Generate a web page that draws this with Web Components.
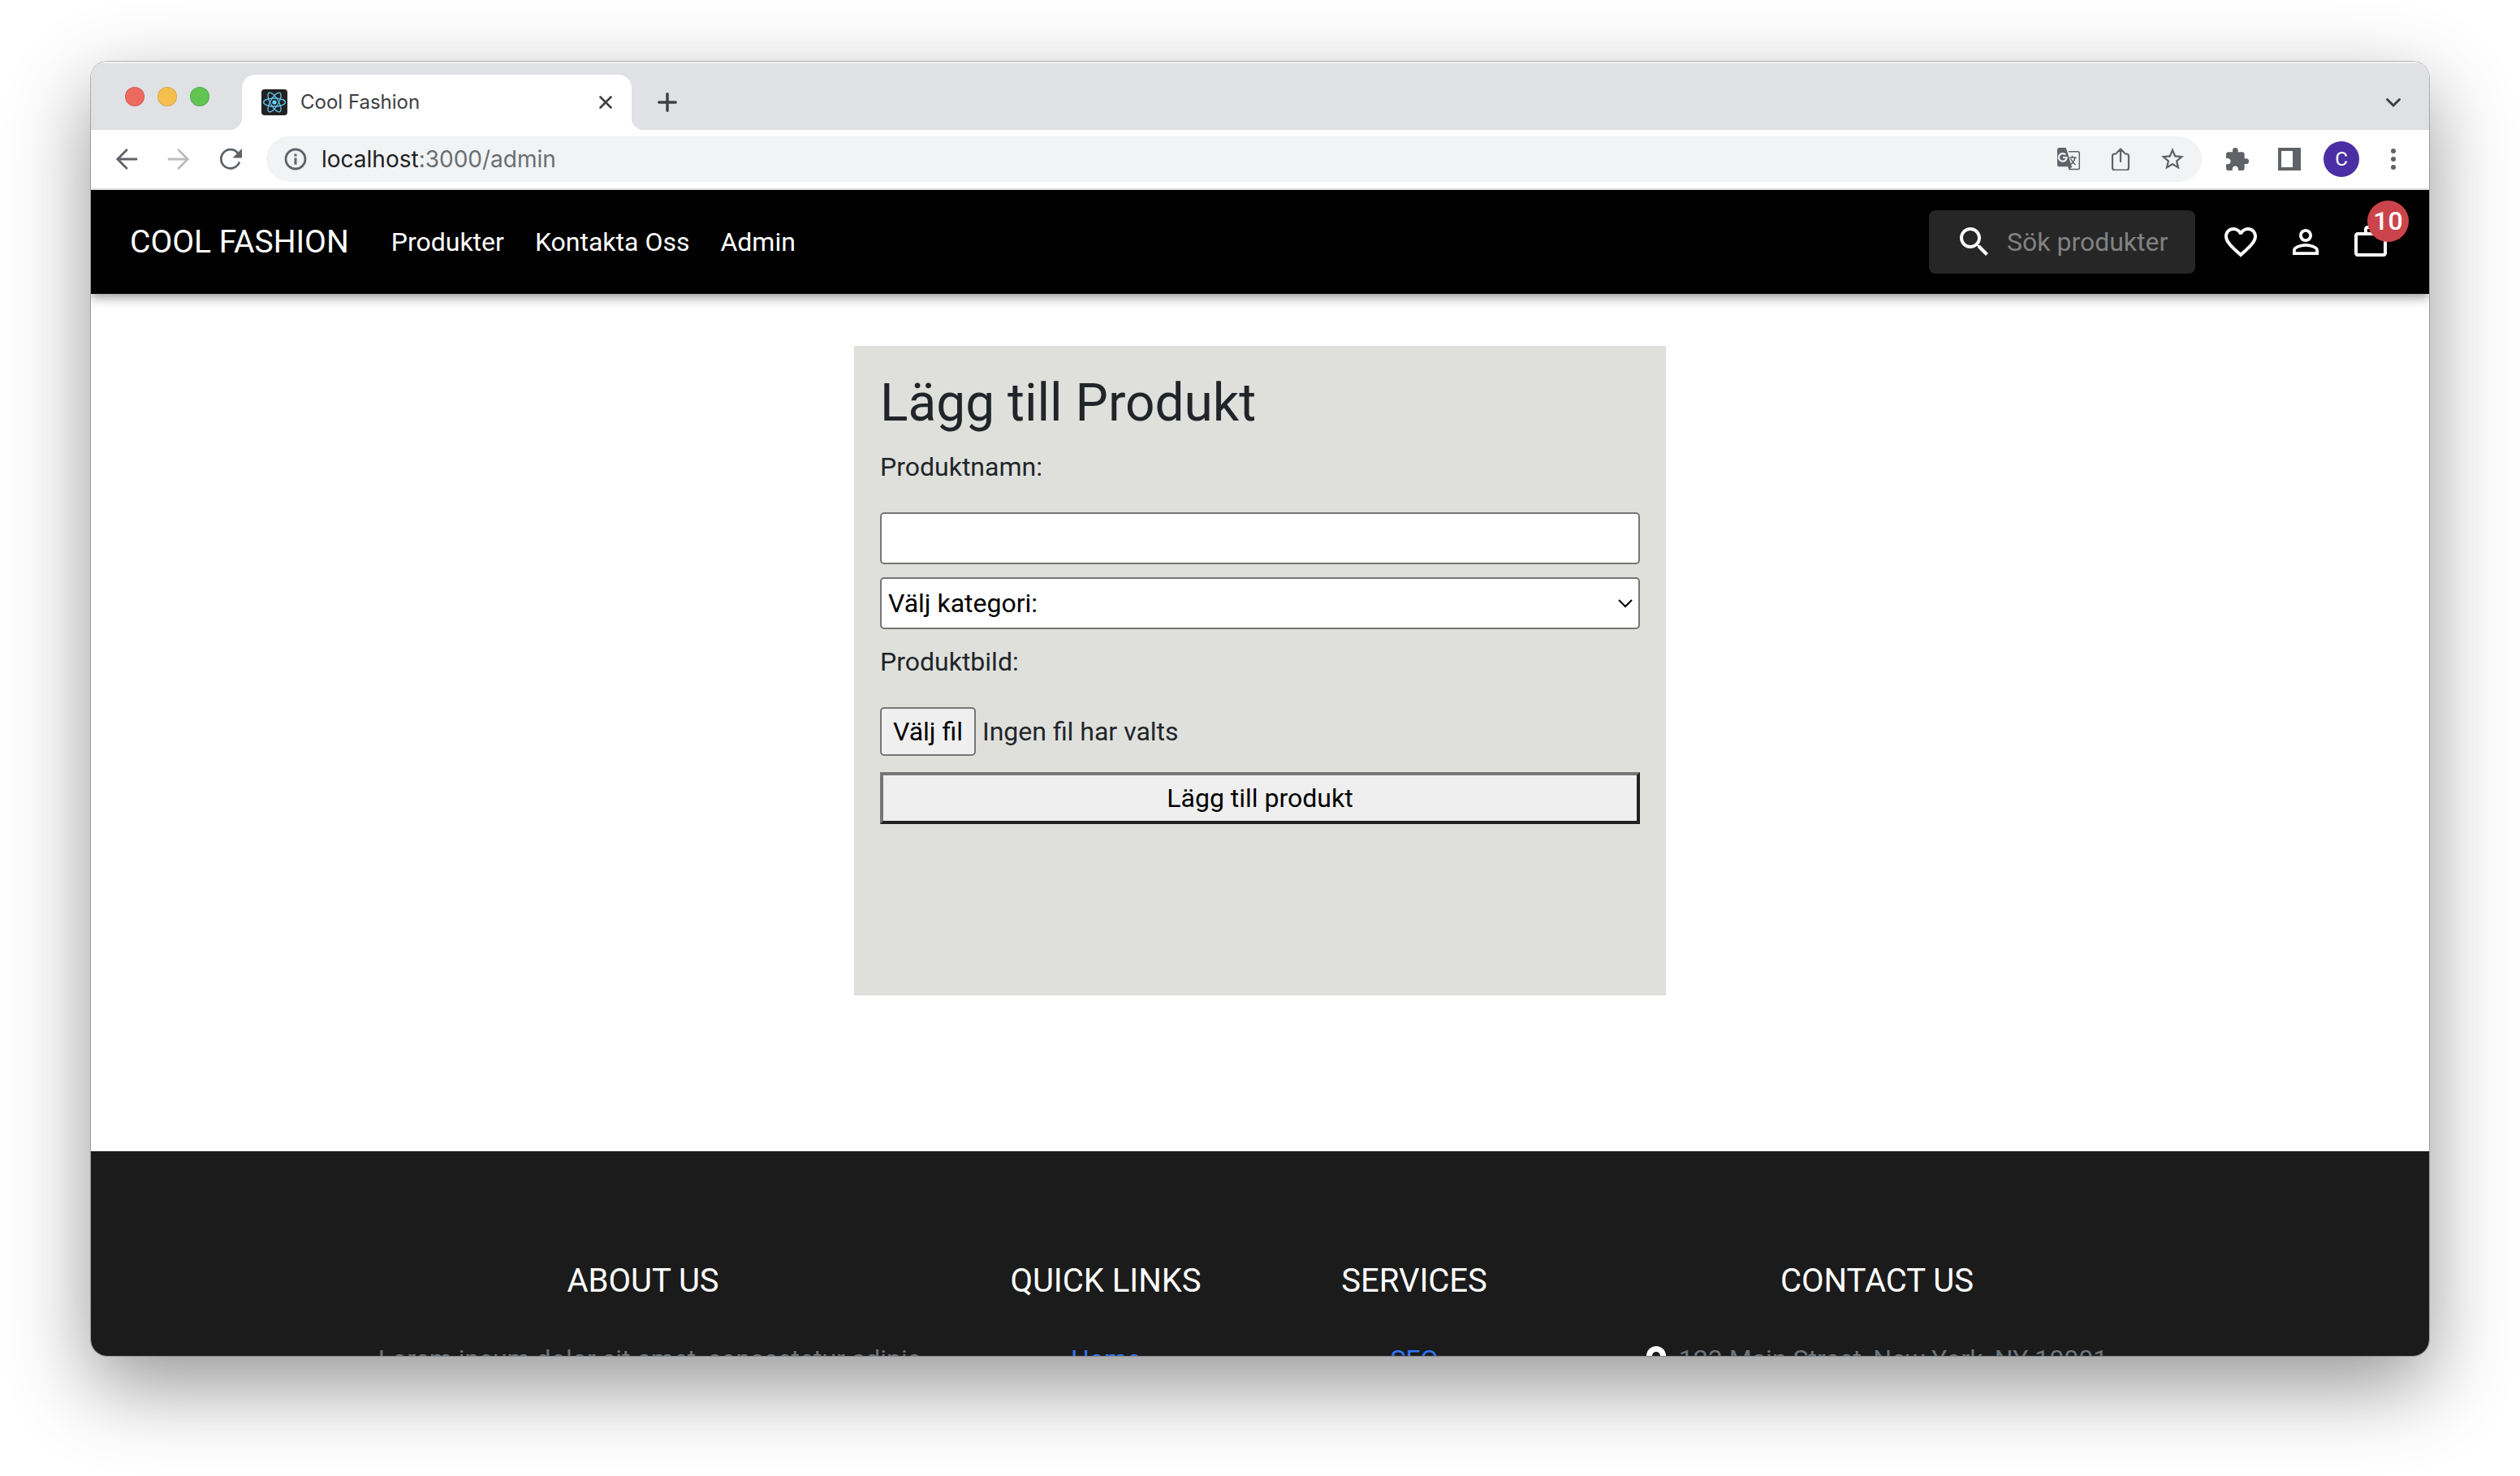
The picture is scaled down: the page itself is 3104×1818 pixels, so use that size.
<!DOCTYPE html>
<html lang="sv">
<head>
<meta charset="utf-8">
<title>Cool Fashion</title>
<style>
html,body{margin:0;height:100%}
body{background:#fff;font-family:Roboto,sans-serif;color:#212529;font-size:32px;line-height:48px;overflow:hidden}
</style>
</head>
<body>
<browser-window>
  <browser-tabs slot="chrome"></browser-tabs>
  <browser-toolbar slot="chrome"></browser-toolbar>
  <site-nav></site-nav>
  <main-area><product-form></product-form></main-area>
  <site-footer></site-footer>
</browser-window>
<script>
const define = (name, css, html) => customElements.define(name, class extends HTMLElement {
  constructor() {
    super();
    this.attachShadow({ mode: 'open' }).innerHTML =
      `<style>:host,*{box-sizing:border-box}svg{display:block;flex:none}button,input,select{font:inherit;margin:0}button{padding:0;cursor:pointer}a{text-decoration:none;color:inherit}${css}</style>${html}`;
  }
});

define('browser-window', `
:host{display:block;height:100vh;padding:76px 112px 148px}
.frame{height:100%;display:flex;flex-direction:column;border-radius:20px;overflow:hidden;background:#fff}
.shadow{height:100%;border-radius:20px;box-shadow:0 0 0 1px rgba(0,0,0,.24),0 36px 100px rgba(0,0,0,.42)}
.page{flex:1;min-height:0;overflow:hidden;display:flex;flex-direction:column}
`, `<div class="shadow"><div class="frame"><slot name="chrome"></slot><div class="page"><slot></slot></div></div></div>`);

define('browser-tabs', `
:host{display:flex;flex:none;height:84px;background:#dfe1e5;align-items:flex-end;padding:2px 32px 0 42px;color:#3c4043;font:24px/32px Inter,sans-serif;box-shadow:inset 0 2px 1px rgba(255,255,255,.6)}
.lights{display:flex;gap:16px;align-self:center;margin-right:40px}
.lights button{width:24px;height:24px;border-radius:50%;border:1px solid rgba(0,0,0,.12);background:#ed6a5e}
.lights button:nth-child(2){background:#f5bf4f}
.lights button:nth-child(3){background:#61c554}
.tab{position:relative;width:480px;height:68px;background:#fff;border-radius:16px 16px 0 0;display:flex;align-items:center;padding:0 24px;gap:16px}
.tab::before,.tab::after{content:"";position:absolute;bottom:0;width:16px;height:16px;background:radial-gradient(circle at 0 0,transparent 16px,#fff 17px)}
.tab::before{left:-16px}
.tab::after{right:-16px;background:radial-gradient(circle at 100% 0,transparent 16px,#fff 17px)}
.tab span{flex:1}
.ic{border:0;background:none}
.new{margin:0 0 22px 32px}
.more{margin:0 0 22px auto;width:24px}
`, `
<div class="lights"><button aria-label="Stäng"></button><button aria-label="Minimera"></button><button aria-label="Zooma"></button></div>
<div class="tab">
<svg width="32" height="32" viewBox="0 0 32 32"><rect width="32" height="32" rx="4" fill="#222"/><g fill="none" stroke="#61c8ee" stroke-width="1.3"><ellipse cx="16" cy="16" rx="13.4" ry="5"/><ellipse cx="16" cy="16" rx="13.4" ry="5" transform="rotate(60 16 16)"/><ellipse cx="16" cy="16" rx="13.4" ry="5" transform="rotate(120 16 16)"/></g><circle cx="16" cy="16" r="2.6" fill="#61dafb"/></svg>
<span>Cool Fashion</span>
<button class="ic" aria-label="Stäng flik"><svg width="16" height="16" viewBox="0 0 16 16" stroke="#3c4043" stroke-width="2.6" stroke-linecap="round"><path d="M1.5 1.5l13 13M14.5 1.5l-13 13"/></svg></button>
</div>
<button class="ic new" aria-label="Ny flik"><svg width="24" height="24" viewBox="0 0 24 24" stroke="#3c4043" stroke-width="3.4" stroke-linecap="round"><path d="M12 1.8v20.4M1.8 12h20.4"/></svg></button>
<button class="ic more" aria-label="Sök flikar"><svg width="24" height="24" viewBox="0 0 24 24" fill="none" stroke="#3c4043" stroke-width="3" stroke-linecap="round"><path d="M4.500 8.500l7.500 7.500 7.500-7.500"/></svg></button>
`);

define('browser-toolbar', `
:host{display:flex;flex:none;height:74px;background:#fff;border-bottom:2px solid #dcdddd;align-items:center;padding:0 30px;color:#5f6368;font:28px/36px Inter,sans-serif}
.ic{border:0;background:none;width:28px;height:28px;color:inherit}
.left{display:flex;gap:36px;margin-right:30px}
.off{color:#babcbe}
.omni{flex:1;height:56px;border-radius:28px;background:#f1f3f4;display:flex;align-items:center;padding:0 22px;gap:18px}
.omni a{flex:1;color:#6a6e72}
.omni b{font-weight:400;color:#202124}
.tools{display:flex;gap:36px}
.right{display:flex;gap:36px;margin-left:30px;align-items:center}
.avatar{width:44px;height:44px;border:0;border-radius:50%;background:#4b2ea3;color:#fff;font:24px/44px Roboto,sans-serif;margin:0 -8px}
`, `
<div class="left">
<button class="ic" aria-label="Tillbaka"><svg width="28" height="28" viewBox="0 0 28 28" fill="none" stroke="currentColor" stroke-width="2.8" stroke-linecap="round"><path d="M26 14H3M14 2.800L2.800 14 14 25.200"/></svg></button>
<button class="ic off" aria-label="Framåt"><svg width="28" height="28" viewBox="0 0 28 28" fill="none" stroke="currentColor" stroke-width="2.8" stroke-linecap="round"><path d="M2 14h23M14 2.800L25.200 14 14 25.200"/></svg></button>
<button class="ic" aria-label="Ladda om"><svg width="28" height="28" viewBox="0 0 28 28"><path d="M24.500 18.500A11.600 11.600 0 1 1 22.500 6" fill="none" stroke="currentColor" stroke-width="2.8" stroke-linecap="round"/><path d="M28 1v11.500H16.500z" fill="currentColor"/></svg></button>
</div>
<div class="omni">
<svg width="28" height="28" viewBox="0 0 28 28"><circle cx="14" cy="14" r="12" fill="none" stroke="currentColor" stroke-width="2.800"/><path d="M12.500 7.500h3v3h-3zM12.500 12.500h3v8.300h-3z" fill="currentColor"/></svg>
<a href="#"><b>localhost</b>:3000/admin</a>
<div class="tools">
<button class="ic" aria-label="Översätt"><svg width="28" height="28" viewBox="0 0 28 28"><path d="M14 4.700h11.500a1.800 1.800 0 0 1 1.800 1.800v18.300a1.800 1.800 0 0 1-1.800 1.800H14.500" fill="none" stroke="currentColor" stroke-width="1.500"/><path d="M2.500 0h8.300l1.400 4.200 5.600 19H2.500A2.500 2.500 0 0 1 0 20.700V2.500A2.500 2.500 0 0 1 2.500 0z" fill="currentColor"/><path d="M13 23h5.500l-4 4.500z" fill="currentColor"/><path d="M10.200 8.600A4.800 4.800 0 1 0 11.500 12H7" fill="none" stroke="#f1f3f4" stroke-width="2.200"/><path d="M15 12h8.500M18.500 9.800v2.200M22 12c-.8 4-2.500 6.500-5 8.500M16.500 13.500c1.500 3 3.500 5.500 6 7.500" fill="none" stroke="currentColor" stroke-width="1.500"/></svg></button>
<button class="ic" aria-label="Dela"><svg width="28" height="28" viewBox="0 0 28 28" fill="none" stroke="currentColor" stroke-width="2.200" stroke-linecap="round" stroke-linejoin="round"><path d="M8.500 7.500H7a3 3 0 0 0-3 3v14a3 3 0 0 0 3 3h14a3 3 0 0 0 3-3v-14a3 3 0 0 0-3-3H19.500M14 17V2M9.500 6L14 1.500 18.500 6"/></svg></button>
<button class="ic" aria-label="Bokmärk"><svg width="28" height="28" viewBox="2 2 20 20" fill="currentColor"><path d="M22 9.240l-7.190-.62L12 2 9.190 8.630 2 9.240l5.460 4.730L5.820 21 12 17.270 18.180 21l-1.630-7.030L22 9.240zM12 15.400l-3.760 2.270 1-4.280-3.320-2.880 4.380-.38L12 6.100l1.710 4.040 4.380.38-3.320 2.880 1 4.280L12 15.400z"/></svg></button>
</div>
</div>
<div class="right">
<button class="ic" aria-label="Tillägg"><svg width="28" height="28" viewBox="2 1 21 21" fill="currentColor"><path d="M20.500 11H19V7c0-1.100-.9-2-2-2h-4V3.500a2.500 2.500 0 0 0-5 0V5H4c-1.100 0-1.990.9-1.990 2v3.800H3.500c1.490 0 2.700 1.210 2.700 2.700s-1.210 2.700-2.700 2.700H2V20c0 1.100.9 2 2 2h3.800v-1.500c0-1.490 1.210-2.700 2.700-2.700s2.700 1.210 2.700 2.700V22H17c1.100 0 2-.9 2-2v-4h1.500a2.500 2.500 0 0 0 0-5z"/></svg></button>
<button class="ic" aria-label="Sidopanel"><svg width="28" height="28" viewBox="0 0 28 28"><path d="M0 0h28v28H0zM4 4v20h14V4z" fill="currentColor" fill-rule="evenodd"/></svg></button>
<button class="avatar">C</button>
<button class="ic" aria-label="Meny"><svg width="28" height="28" viewBox="0 0 28 28" fill="currentColor"><circle cx="14" cy="4" r="3"/><circle cx="14" cy="14" r="3"/><circle cx="14" cy="24" r="3"/></svg></button>
</div>
`);

define('site-nav', `
:host{display:flex;flex:none;height:128px;background:#000;color:#fff;align-items:center;padding:0 48px;position:relative;box-shadow:0 4px 8px -2px rgba(0,0,0,.2),0 8px 10px rgba(0,0,0,.14),0 2px 20px rgba(0,0,0,.12)}
.brand{font-size:39px;margin-right:52px}
nav{display:flex;gap:38px}
.search{margin-left:auto;height:78px;width:328px;border-radius:8px;background:#262626;display:flex;align-items:center;padding-left:32px;gap:16px}
.search input{flex:1;min-width:0;border:0;background:none;color:#fff;padding:0;outline:0}
.search input::placeholder{color:#828282;opacity:1}
.icons{display:flex;gap:32px;margin-left:32px}
.icons a{position:relative}
.badge{position:absolute;left:20px;top:-27px;width:51px;height:51px;border-radius:50%;background:#cc444b;line-height:50px;text-align:center;font-weight:500}
`, `
<a class="brand" href="#">COOL FASHION</a>
<nav><a href="#">Produkter</a><a href="#">Kontakta Oss</a><a href="#">Admin</a></nav>
<label class="search"><svg width="48" height="48" viewBox="0 0 24 24" fill="#fff"><path d="M15.500 14h-.79l-.28-.27C15.410 12.590 16 11.110 16 9.500 16 5.910 13.090 3 9.500 3S3 5.910 3 9.500 5.910 16 9.500 16c1.610 0 3.090-.59 4.230-1.570l.27.28v.79l5 4.990L20.490 19l-4.990-5zm-6 0C7.010 14 5 11.990 5 9.500S7.010 5 9.500 5 14 7.010 14 9.500 11.990 14 9.500 14z"/></svg><input type="text" placeholder="Sök produkter" aria-label="Sök produkter"></label>
<div class="icons">
<a href="#" aria-label="Favoriter"><svg width="48" height="48" viewBox="0 0 24 24" fill="#fff"><path d="M16.500 3c-1.740 0-3.410.81-4.500 2.090C10.910 3.810 9.240 3 7.500 3 4.420 3 2 5.420 2 8.500c0 3.780 3.400 6.860 8.550 11.540L12 21.350l1.450-1.320C18.600 15.360 22 12.280 22 8.500 22 5.420 19.580 3 16.500 3zm-4.400 15.550l-.1.1-.1-.1C7.140 14.240 4 11.390 4 8.500 4 6.500 5.500 5 7.500 5c1.540 0 3.040.99 3.570 2.360h1.870C13.460 5.990 14.960 5 16.500 5c2 0 3.500 1.500 3.500 3.500 0 2.890-3.140 5.740-7.900 10.050z"/></svg></a>
<a href="#" aria-label="Konto"><svg width="48" height="48" viewBox="0 0 24 24" fill="#fff"><path d="M12 5.900a2.100 2.100 0 1 1 0 4.200 2.100 2.100 0 0 1 0-4.200m0 9c2.970 0 6.100 1.460 6.100 2.100v1.100H5.900V17c0-.64 3.130-2.100 6.100-2.100M12 4C9.790 4 8 5.790 8 8s1.790 4 4 4 4-1.790 4-4-1.790-4-4-4zm0 9c-2.670 0-8 1.340-8 4v3h16v-3c0-2.660-5.330-4-8-4z"/></svg></a>
<a href="#" aria-label="Varukorg"><svg width="48" height="48" viewBox="0 0 24 24" fill="#fff"><path d="M20 6h-4V4c0-1.110-.89-2-2-2h-4c-1.110 0-2 .89-2 2v2H4c-1.110 0-2 .89-2 2v11c0 1.110.89 2 2 2h16c1.110 0 2-.89 2-2V8c0-1.110-.89-2-2-2zM10 4h4v2h-4V4zm10 15H4V8h16v11z"/></svg><span class="badge">10</span></a>
</div>
`);

define('main-area', `:host{display:block;flex:none;padding:64px 32px 192px}`, `<slot></slot>`);

define('product-form', `
:host{display:block;max-width:1000px;min-height:800px;margin:0 auto;padding:32px;background:#dfe0dc}
h2{margin:0 0 16px;font-size:64px;line-height:77px;font-weight:400}
form{display:flex;flex-direction:column;gap:16px}
.field{display:flex;flex-direction:column;gap:32px}
.text,select{width:100%;height:64px;border:2px solid #767676;border-radius:5px;background:#fff;color:#000;padding:0 8px}
.sel{display:grid;align-items:center}
.sel>*{grid-area:1/1}
.sel svg{justify-self:end;margin-right:8px;pointer-events:none}
select{appearance:none}
.file{display:flex;align-items:center;gap:8px;margin-bottom:4px}
.file input{position:absolute;width:1px;height:1px;opacity:0}
.pick{height:60px;line-height:56px;padding:0 14px;border:2px solid #767676;border-radius:5px;background:#efefef;color:#000}
.submit{height:64px;border:4px solid;border-color:#767676 #212121 #212121 #767676;background:#efefef;color:#000}
`, `
<h2>Lägg till Produkt</h2>
<form>
<div class="field"><label for="name">Produktnamn:</label><input class="text" id="name" type="text"></div>
<div class="sel"><select aria-label="Kategori"><option>Välj kategori:</option></select><svg width="20" height="20" viewBox="0 0 20 20" fill="none" stroke="#000" stroke-width="2"><path d="M2 6l8 8 8-8"/></svg></div>
<div class="field"><label for="file">Produktbild:</label>
<label class="file"><input id="file" type="file"><span class="pick">Välj fil</span><span>Ingen fil har valts</span></label></div>
<button class="submit" type="button">Lägg till produkt</button>
</form>
`);

define('site-footer', `
:host{display:block;flex:none;background:#1b1b1b;color:#6c757d;padding:136px 32px}
.grid{display:grid;grid-template-columns:2fr 1fr 1fr 2fr;max-width:2280px;margin:0 auto;text-align:center}
section{padding:0 24px}
h5{margin:0 0 48px;font-size:40px;line-height:48px;font-weight:400;color:#fff}
p{margin:0}
.about{padding-left:16px}
ul{margin:0;padding:0;list-style:none}
ul a{color:#2f76f5}
.addr{display:flex;justify-content:center;align-items:center;gap:16px}
`, `
<div class="grid">
<section><h5>ABOUT US</h5><p class="about">Lorem ipsum dolor sit amet, consectetur adipis</p></section>
<section><h5>QUICK LINKS</h5><ul><li><a href="#">Home</a></li></ul></section>
<section><h5>SERVICES</h5><ul><li><a href="#">SEO</a></li></ul></section>
<section><h5>CONTACT US</h5><p class="addr"><svg width="24" height="32" viewBox="0 0 384 512" fill="#fff"><path d="M172 502C27 291 0 270 0 192a192 192 0 1 1 384 0c0 78-27 99-172 310-10 13-30 13-40 0zM192 272a80 80 0 1 0 0-160 80 80 0 0 0 0 160z"/></svg>123 Main Street, New York, NY 10001</p></section>
</div>
`);
</script>
</body>
</html>
